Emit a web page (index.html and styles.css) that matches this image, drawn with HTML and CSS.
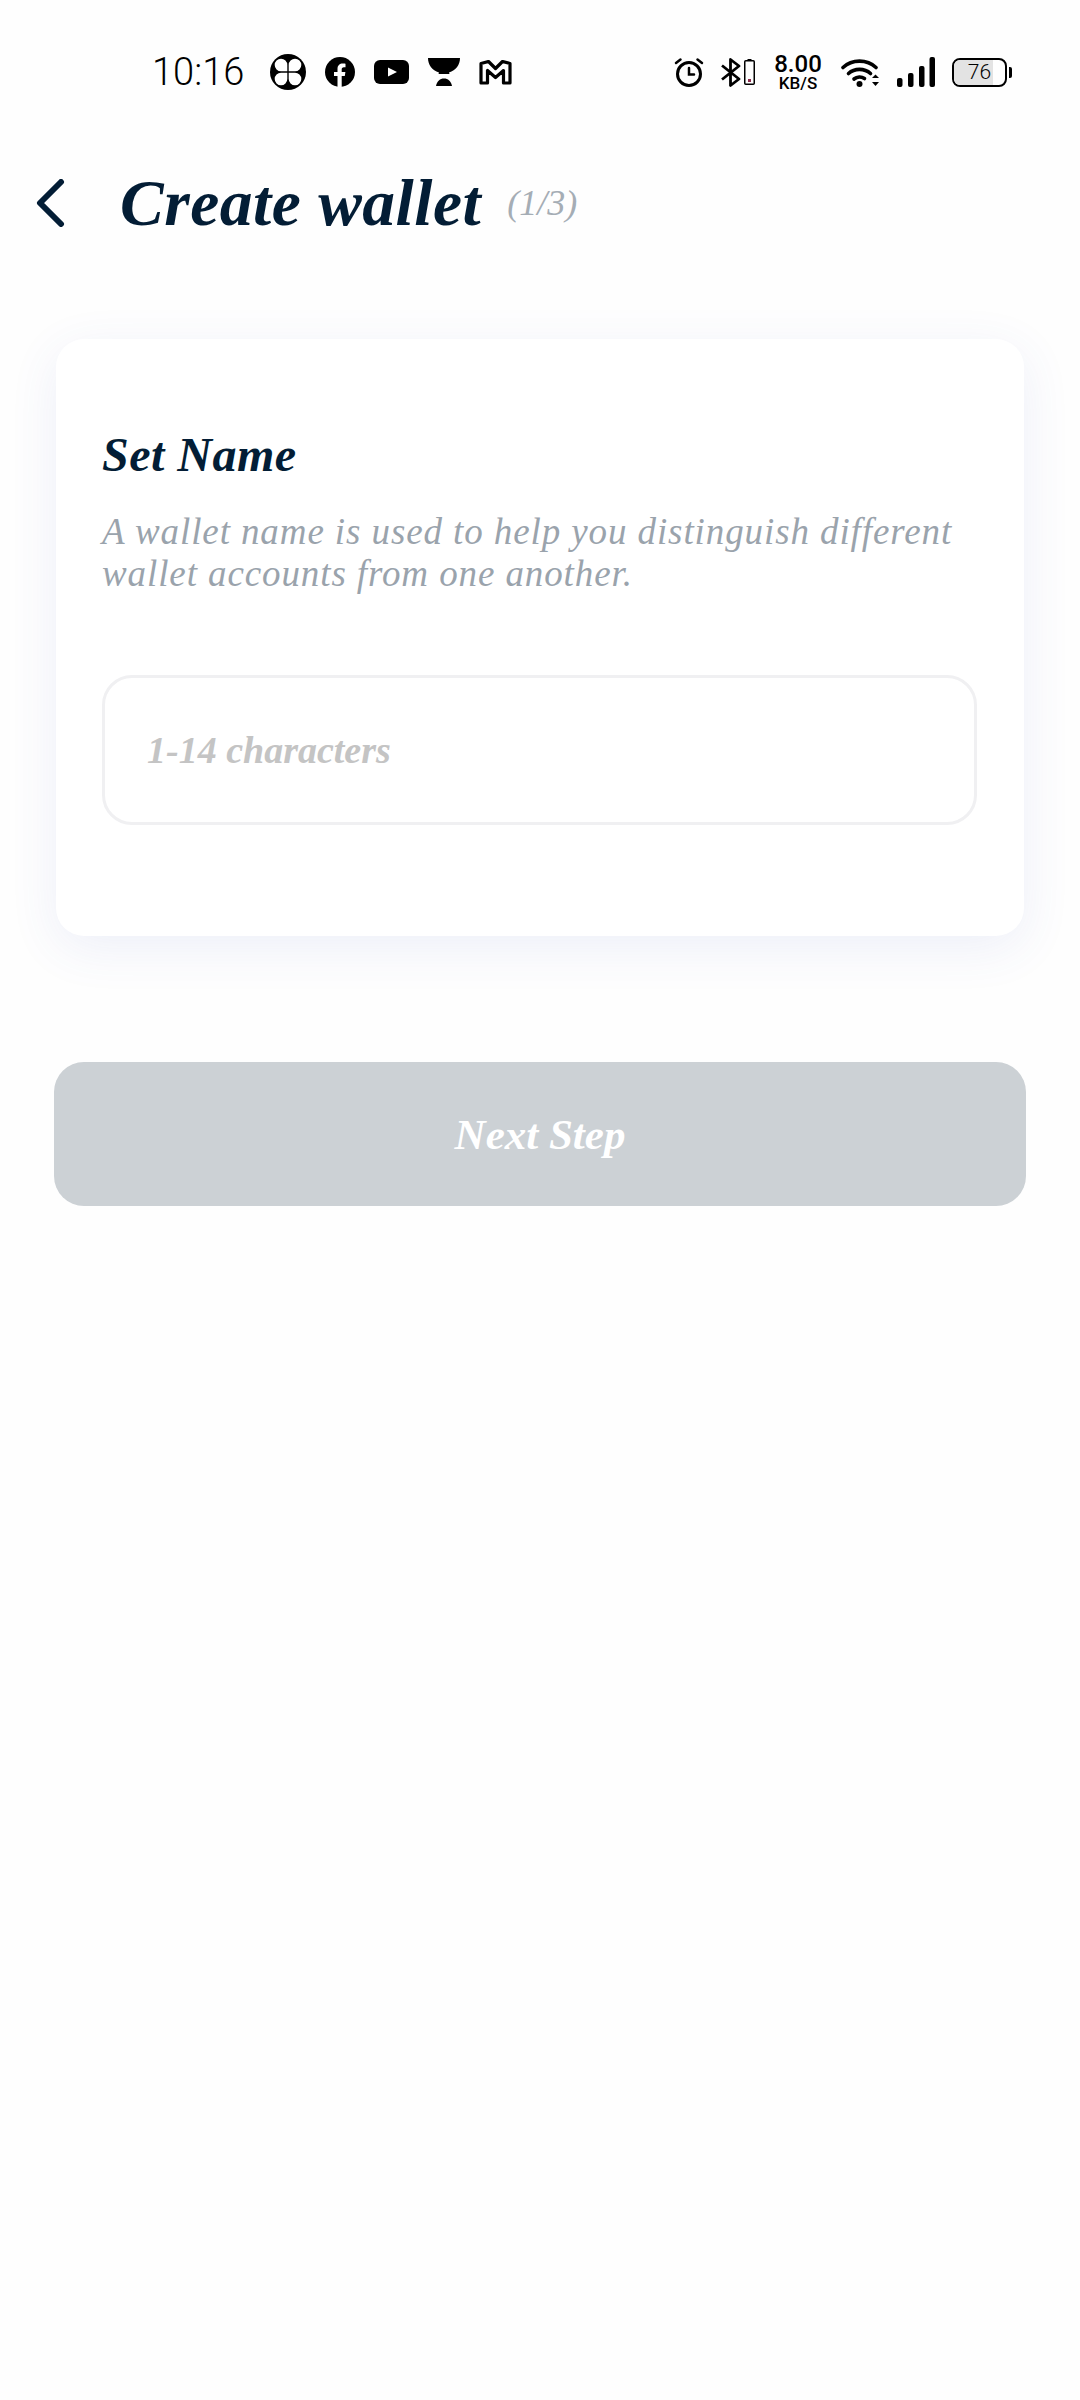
FILE: index.html
```html
<!DOCTYPE html>
<html lang="en">
<head>
  <meta charset="UTF-8" />
  <meta name="viewport" content="width=device-width, initial-scale=1.0"/>
  <title>Create wallet</title>
  <link rel="stylesheet" href="styles.css">
</head>
<body>
  <!-- Status bar -->
  <div class="status-bar">
    <div class="status-left">
      <span class="time">10:16</span>
      <svg class="ic-clover" width="36" height="36" viewBox="0 0 36 36">
        <circle cx="18" cy="18" r="18" fill="#000"/>
        <g fill="#fff">
          <path d="M17.300 17.300V11A6.300 6.300 0 1 0 11 17.300Z"/>
          <path d="M18.700 17.300V11A6.300 6.300 0 1 1 25 17.300Z"/>
          <path d="M17.300 18.700V25A6.300 6.300 0 1 1 11 18.700Z"/>
          <path d="M18.700 18.700V25A6.300 6.300 0 1 0 25 18.700Z"/>
        </g>
      </svg>
      <svg width="30" height="30" viewBox="0 0 30 30">
        <circle cx="15" cy="15" r="15" fill="#000"/>
        <path d="M12.500 30V19H9V15H12.500V12C12.500 8.400 14.600 6.500 17.800 6.500C19.200 6.500 20.500 6.700 20.500 6.700V10.200H18.900C17.200 10.200 16.700 11.200 16.700 12.300V15H20.400L19.800 19H16.700V30Z" fill="#fff"/>
      </svg>
      <svg width="35" height="24" viewBox="0 0 35 24">
        <rect width="35" height="24" rx="6" fill="#000"/>
        <path d="M14 7.500L23 12L14 16.500Z" fill="#fff"/>
      </svg>
      <svg width="32" height="28" viewBox="0 0 32 28">
        <path d="M0 0H32C32 7 28 12 21 14.500L21.500 16H10.500L11 14.500C4 12 0 7 0 0Z" fill="#000"/>
        <path d="M8 28C9 23 12 20.500 16 20.500C20 20.500 23 23 24 28Z" fill="#000"/>
      </svg>
      <svg width="33" height="25" viewBox="0 0 33 25">
        <path d="M2 23V3.500L9.500 1.500L16.500 8.500L23.500 1.500L31 3.500V23H24.500V10.500L16.500 17.500L8.500 10.500V23Z" fill="#fff" stroke="#000" stroke-width="3.200" stroke-linejoin="round"/>
      </svg>
    </div>
    <div class="status-right">
      <svg width="30" height="30" viewBox="0 0 30 30" fill="none" stroke="#000" stroke-linecap="round">
        <circle cx="15" cy="17" r="11.500" stroke-width="3"/>
        <path d="M15 11V17.500H20" stroke-width="2.500"/>
        <path d="M2 6L6.500 2.500M28 6L23.500 2.500" stroke-width="2.500"/>
      </svg>
      <div class="bt-group">
        <svg width="20" height="29" viewBox="0 0 20 29" fill="none" stroke="#000" stroke-width="2.800" stroke-linejoin="round">
          <path d="M1 7.500L18 21L9.500 27.500V1.500L18 8L1 21.500"/>
        </svg>
        <svg width="11" height="26" viewBox="0 0 11 26">
          <rect x="3.500" y="0" width="4" height="2" fill="#000"/>
          <rect x="0.750" y="1.750" width="9.500" height="23.500" rx="1" fill="none" stroke="#000" stroke-width="1.500"/>
          <rect x="4" y="20" width="3" height="3" fill="#8a2b4a"/>
        </svg>
      </div>
      <div class="speed">
        <span class="speed-num">8.00</span>
        <span class="speed-unit">KB/S</span>
      </div>
      <svg width="39" height="29" viewBox="0 0 39 29" fill="none" stroke="#000" stroke-width="3.600" stroke-linecap="round">
        <path d="M2 9.500C11 1 26 1 35 9.500"/>
        <path d="M7.500 15.500C13.500 10 23.500 10 29.500 15.500"/>
        <path d="M13 21C16 18.500 20.500 18.500 23.500 20.500"/>
        <circle cx="18.500" cy="26" r="3" fill="#000" stroke="none"/>
        <path d="M31 20L34.500 16.500L38 20Z" fill="#000" stroke="none"/>
        <path d="M31 24L34.500 28L38 24Z" fill="#000" stroke="none"/>
      </svg>
      <svg width="38" height="30" viewBox="0 0 38 30" fill="#000">
        <rect x="0" y="21" width="5.500" height="9" rx="2"/>
        <rect x="11" y="16" width="5.500" height="14" rx="2"/>
        <rect x="22" y="9" width="5.500" height="21" rx="2"/>
        <rect x="32.500" y="0" width="5.500" height="30" rx="2"/>
      </svg>
      <div class="battery">
        <div class="battery-body">
          <div class="battery-fill" style="width: 76%"></div>
          <span class="battery-num">76</span>
        </div>
        <div class="battery-nub"></div>
      </div>
    </div>
  </div>

  <div class="page-head">
    <svg class="back" width="30" height="48" viewBox="0 0 30 48" fill="none" stroke="#031d35" stroke-width="6" stroke-linecap="round" stroke-linejoin="round">
      <path d="M26 3L5 24L26 45"/>
    </svg>
    <h1>Create wallet</h1>
    <span class="step">(1/3)</span>
  </div>

  <div class="container">
    <div class="card">
      <h2>Set Name</h2>
      <p class="hint">A wallet name is used to help you distinguish different wallet accounts from one another.</p>
      <input class="name-input" type="text" placeholder="1-14 characters" />
    </div>
    <button class="btn">Next Step</button>
  </div>
</body>
</html>
```

FILE: styles.css
```css
body { margin: 0; background: #fefefe; color: #031d35; font-family: "Liberation Serif", serif; font-style: italic; }

.status-bar { display: flex; justify-content: space-between; align-items: center; height: 144px; padding: 0 68px 0 152px; font-style: normal; font-family: Roboto, sans-serif; color: #000; }
.status-left, .status-right { display: flex; align-items: center; }
.status-left { gap: 19px; }
.status-right { gap: 17px; }
.time { font-size: 38px; font-weight: 300; width: 91px; margin-right: 8px; line-height: 1; }
.bt-group { display: flex; align-items: center; gap: 3px; }
.speed { display: flex; flex-direction: column; align-items: center; gap: 3px; width: 52px; }
.speed-num { font-size: 24px; font-weight: 500; line-height: 18px; }
.speed-unit { font-size: 17px; font-weight: 500; line-height: 14px; }
.battery { display: flex; align-items: center; gap: 2px; }
.battery-body { position: relative; width: 51px; height: 25px; border: 2.500px solid #000; border-radius: 8px; overflow: hidden; display: flex; align-items: center; justify-content: center; }
.battery-fill { position: absolute; left: 0; top: 0; bottom: 0; background: #e3e3e3; }
.battery-num { position: relative; font-size: 21px; font-weight: 300; line-height: 1; }
.battery-nub { width: 3px; height: 11px; background: #000; border-radius: 0 2px 2px 0; }

.page-head { display: flex; align-items: center; height: 118px; padding-left: 35px; padding-bottom: 4px; }
.back { margin-right: 55px; }
h1 { margin: 0; font-size: 65.500px; font-weight: bold; letter-spacing: 0.500px; }
.step { margin-left: 26px; font-size: 36px; color: #a5adb5; }

.container { padding: 73px 54px 0; }
.card { box-sizing: border-box; height: 597px; margin: 0 2px; padding: 86px 47px 0 46px; background: #fff; border-radius: 28px; box-shadow: 0 12px 50px rgba(70, 90, 190, 0.09); }
h2 { margin: 0 0 26px; font-size: 48px; line-height: 60px; font-weight: bold; letter-spacing: 0.500px; }
.hint { margin: 0 0 80px; font-size: 37px; line-height: 42px; color: #9aa3ac; letter-spacing: 0.900px; }
.name-input { display: block; box-sizing: border-box; width: 100%; height: 150px; padding: 0 42px; border: 3px solid #f0f0f2; border-radius: 30px; background: #fff; font-family: inherit; font-style: italic; font-size: 38px; font-weight: bold; outline: none; }
.name-input::placeholder { color: #c4c4c4; opacity: 1; }
.btn { display: block; width: 100%; height: 144px; margin-top: 126px; border: none; border-radius: 30px; background: #ccd1d5; color: #fff; font-family: inherit; font-style: italic; font-weight: bold; font-size: 43px; cursor: pointer; }
```
